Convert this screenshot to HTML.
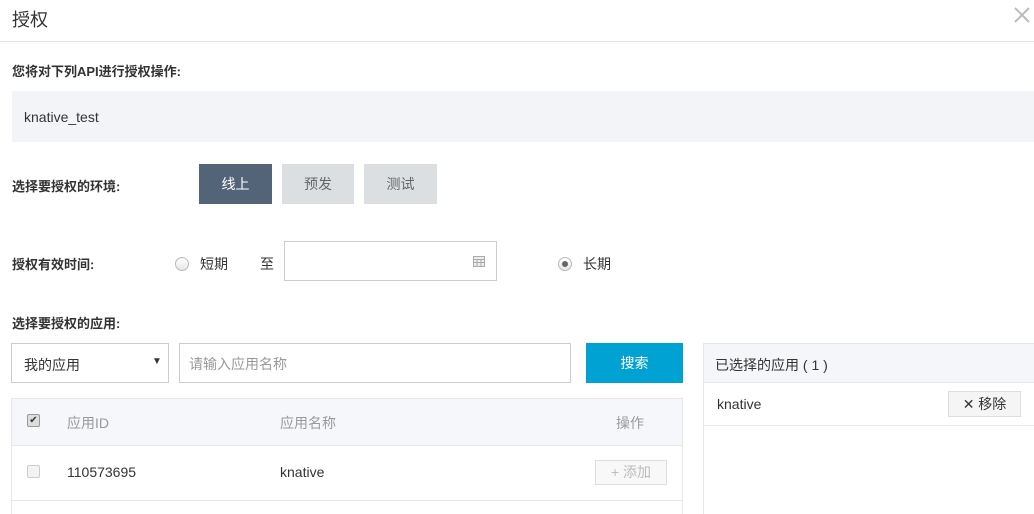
<!DOCTYPE html>
<html><head><meta charset="utf-8"><style>
html,body{margin:0;width:1034px;height:514px;overflow:hidden}
body{background:#fff;font-family:"Liberation Sans","Noto Sans CJK SC",sans-serif;color:#333;position:relative}
.a{position:absolute}
.lbl{font-weight:bold;font-size:13px;color:#333}
.btn{position:absolute;top:164px;height:40px;line-height:40px;text-align:center;font-size:14px}
.radio{position:absolute;width:12px;height:12px;border:1px solid #bbb;border-radius:50%;background:linear-gradient(#fff,#e6e6e6)}
</style></head><body>
<div class="a" style="left:12px;top:6px;font-size:18px;color:#333">授权</div>
<svg class="a" style="left:1014px;top:7px" width="16" height="16"><path d="M1 1L15 15M15 1L1 15" stroke="#bbb" stroke-width="2"/></svg>
<div class="a" style="left:0;top:41px;width:1034px;height:1px;background:#e5e5e5"></div>
<div class="a lbl" style="left:12px;top:61px">您将对下列API进行授权操作:</div>
<div class="a" style="left:12px;top:91px;width:1022px;height:51px;background:#f2f4f7"></div>
<div class="a" style="left:24px;top:109px;font-size:14px">knative_test</div>
<div class="a lbl" style="left:12px;top:176px">选择要授权的环境:</div>
<div class="btn" style="left:199px;width:73px;background:#546478;color:#fff">线上</div>
<div class="btn" style="left:282px;width:72px;background:#dcdfe2;color:#666">预发</div>
<div class="btn" style="left:364px;width:73px;background:#dcdfe2;color:#666">测试</div>
<div class="a lbl" style="left:12px;top:254px">授权有效时间:</div>
<div class="radio" style="left:175px;top:257px"></div>
<div class="a" style="left:200px;top:254px;font-size:14px">短期</div>
<div class="a" style="left:260px;top:254px;font-size:14px">至</div>
<div class="a" style="left:284px;top:241px;width:211px;height:38px;border:1px solid #ccc"></div>
<svg class="a" style="left:473px;top:256px" width="12" height="11"><rect x="0.5" y="0.5" width="11" height="10" fill="#eee" stroke="#aaa"/><path d="M0 3.5H12M0 6.5H12M4 3V11M8 3V11" stroke="#aaa"/></svg>
<div class="radio" style="left:558px;top:257px"></div>
<div class="a" style="left:562px;top:261px;width:6px;height:6px;border-radius:50%;background:#666"></div>
<div class="a" style="left:583px;top:254px;font-size:14px">长期</div>
<div class="a lbl" style="left:12px;top:313px">选择要授权的应用:</div>
<div class="a" style="left:11px;top:343px;width:156px;height:38px;border:1px solid #ccc"></div>
<div class="a" style="left:24px;top:355px;font-size:14px">我的应用</div>
<div class="a" style="left:152px;top:356px;font-size:10px">▼</div>
<div class="a" style="left:179px;top:343px;width:390px;height:38px;border:1px solid #ccc"></div>
<div class="a" style="left:189px;top:354px;font-size:14px;color:#999">请输入应用名称</div>
<div class="a" style="left:586px;top:343px;width:97px;height:40px;background:#00a2d4;color:#fff;font-size:14px;text-align:center;line-height:40px">搜索</div>
<div class="a" style="left:11px;top:398px;width:670px;height:130px;border:1px solid #e5e8eb"></div>
<div class="a" style="left:12px;top:399px;width:670px;height:46px;background:#f5f7fa;border-bottom:1px solid #e5e8eb"></div>
<div class="a" style="left:12px;top:500px;width:670px;height:1px;background:#e5e8eb"></div>
<div class="a" style="left:27px;top:414px;width:11px;height:11px;border:1px solid #999;border-radius:2px;background:#ddd;font-size:10px;line-height:11px;text-align:center">✔</div>
<div class="a" style="left:67px;top:413px;font-size:14px;color:#999">应用ID</div>
<div class="a" style="left:280px;top:413px;font-size:14px;color:#999">应用名称</div>
<div class="a" style="left:616px;top:413px;font-size:14px;color:#999">操作</div>
<div class="a" style="left:27px;top:465px;width:11px;height:11px;border:1px solid #ccc;border-radius:2px;background:#f3f3f3"></div>
<div class="a" style="left:67px;top:464px;font-size:14px">110573695</div>
<div class="a" style="left:280px;top:464px;font-size:14px">knative</div>
<div class="a" style="left:595px;top:460px;width:70px;height:23px;border:1px solid #ddd;background:#f8f8f8;color:#bbb;font-size:14px;text-align:center;line-height:23px">+ 添加</div>
<div class="a" style="left:703px;top:343px;width:331px;height:190px;border:1px solid #e5e8eb;border-right:none"></div>
<div class="a" style="left:704px;top:344px;width:330px;height:38px;background:#f4f6f9;border-bottom:1px solid #e5e8eb"></div>
<div class="a" style="left:715px;top:355px;font-size:14px">已选择的应用 ( 1 )</div>
<div class="a" style="left:704px;top:425px;width:330px;height:1px;background:#e5e8eb"></div>
<div class="a" style="left:717px;top:396px;font-size:14px">knative</div>
<div class="a" style="left:948px;top:391px;width:71px;height:24px;border:1px solid #ddd;background:#f5f5f5;font-size:14px;text-align:center;line-height:24px">✕ 移除</div>
</body></html>
